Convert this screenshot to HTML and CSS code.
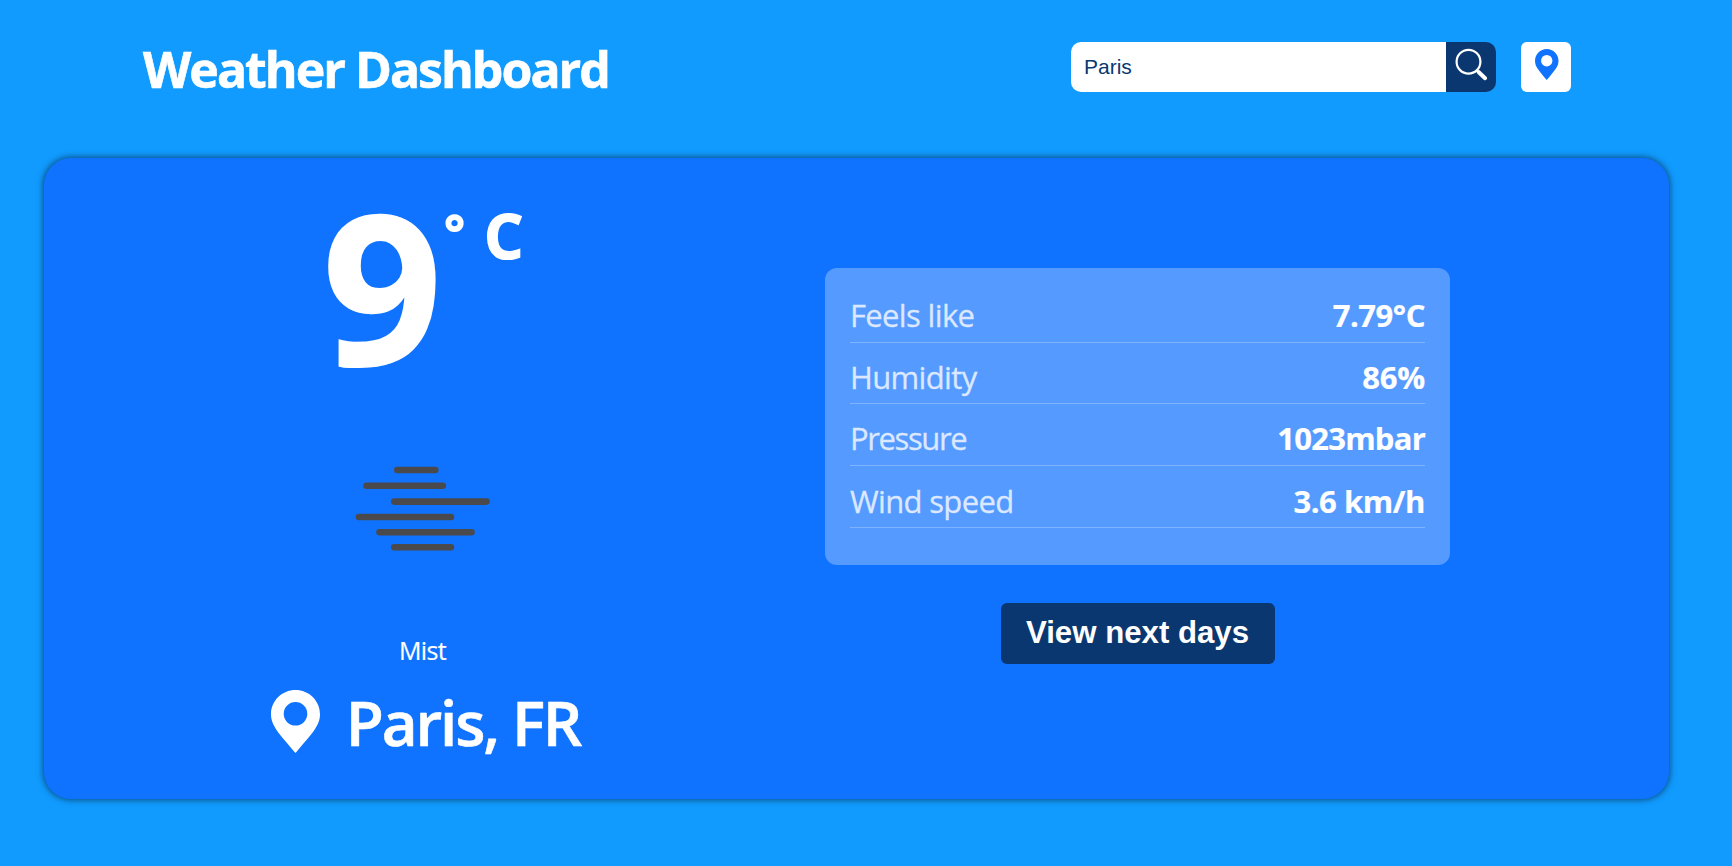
FILE: index.html
```html
<!DOCTYPE html>
<html lang="en">
<head>
<meta charset="utf-8">
<title>Weather Dashboard</title>
<link rel="stylesheet" href="styles.css">
</head>
<body>
<header class="header">
  <h1 class="title">Weather Dashboard</h1>
  <div class="search">
    <input class="search-input" type="text" value="Paris" aria-label="City">
    <button class="search-button" aria-label="Search">
      <svg width="34" height="34" viewBox="0 0 34 34" fill="none" stroke="#fff"><circle cx="14.500" cy="13.700" r="11.900" stroke-width="2.200"/><path d="M22.400 22l2 2" stroke-width="2.600"/><path d="M24.800 24.200l6.300 6" stroke-width="4" stroke-linecap="round"/></svg>
    </button>
    <button class="locate-button" aria-label="Use my location">
      <svg width="23.500" height="31" viewBox="0 0 49 63" preserveAspectRatio="none"><path fill="#1073ff" fill-rule="evenodd" d="M24.500 0C11 0 0 10.800 0 24.200C0 36 9 44.500 24.500 63C40 44.500 49 36 49 24.200C49 10.800 38 0 24.500 0ZM24.500 12a11.800 11.800 0 1 1 0 23.600a11.800 11.800 0 0 1 0-23.600Z"/></svg>
    </button>
  </div>
</header>
<main class="card">
  <section class="current">
    <div class="temp"><span class="temp-value">9</span><span class="temp-degree">°</span><span class="temp-unit">C</span></div>
    <svg class="mist-icon" width="136" height="85" viewBox="0 0 136 85" stroke="#4a4a4d" stroke-width="6.600" stroke-linecap="round"><path d="M42.300 4H80.300M11.500 19.800H87.800M39.300 35.600H131.500M4 51H96M24.500 66.200H116.500M39.300 81.300H96"/></svg>
    <p class="condition">Mist</p>
    <div class="place">
      <svg width="49" height="63" viewBox="0 0 49 63"><path fill="#fff" fill-rule="evenodd" d="M24.500 0C11 0 0 10.800 0 24.200C0 36 9 44.500 24.500 63C40 44.500 49 36 49 24.200C49 10.800 38 0 24.500 0ZM24.500 12a11.800 11.800 0 1 1 0 23.600a11.800 11.800 0 0 1 0-23.600Z"/></svg>
      <h2 class="city">Paris, FR</h2>
    </div>
  </section>
  <section class="details">
    <dl class="stats">
      <div class="row"><dt class="label">Feels like</dt><dd class="value">7.79°C</dd></div>
      <div class="row"><dt class="label">Humidity</dt><dd class="value short">86%</dd></div>
      <div class="row"><dt class="label tight">Pressure</dt><dd class="value wide">1023mbar</dd></div>
      <div class="row last"><dt class="label">Wind speed</dt><dd class="value">3.6 km/h</dd></div>
    </dl>
    <button class="next">View next days</button>
  </section>
</main>
</body>
</html>
```
FILE: styles.css
```css
* { box-sizing: border-box; margin: 0; padding: 0; }
body { height: 866px; overflow: hidden; background: #119bff; color: #fff; font-family: "Open Sans", sans-serif; }
button { border: 0; }
.header { display: flex; justify-content: space-between; align-items: flex-start; height: 158px; padding: 34px 161px 0 143px; }
.title { padding-top: 1px; font-size: 50px; line-height: 68px; font-weight: 700; letter-spacing: -2px; -webkit-text-stroke: .6px #fff; white-space: nowrap; }
.search { display: flex; margin-top: 8px; }
.search-input { width: 375px; height: 50px; padding: 0 13px 1px; border: 0; border-radius: 10px 0 0 10px; background: #fff; color: #0a3770; font: 21px "Liberation Sans", sans-serif; }
.search-button { display: flex; width: 50px; height: 50px; padding: 6px 0 0 8px; border-radius: 0 10px 10px 0; background: #0a3770; }
.locate-button { display: flex; width: 50px; height: 50px; margin-left: 25px; padding: 7px 0 0 14px; border-radius: 6px; background: #fff; }
.card { display: flex; width: 1625px; height: 641px; margin-left: 44px; border-radius: 27px; background: #1073ff; box-shadow: 0 0 6px 1px rgba(0, 0, 0, .5); }
.current { display: flex; flex-direction: column; align-items: center; width: 758px; padding-top: 22px; }
.temp { display: flex; height: 209px; }
.temp-value { font-size: 209px; line-height: 209px; font-weight: 700; -webkit-text-stroke: 2px #fff; }
.temp-degree, .temp-unit { margin-top: 24px; font-size: 62px; line-height: 62px; font-weight: 700; }
.temp-degree { width: 25px; margin-left: 2px; font-size: 50px; line-height: 54px; font-weight: 800; }
.temp-unit { margin-left: 15px; -webkit-text-stroke: 1.2px #fff; }
.mist-icon { margin-top: 77px; }
.condition { margin-top: 82px; padding-right: 1px; font-size: 25px; line-height: 34px; letter-spacing: -.6px; -webkit-text-stroke: .2px #fff; }
.place { display: flex; align-items: center; gap: 26px; height: 80px; margin-top: 14px; padding-left: 5px; }
.city { padding-top: 1px; font-size: 62px; line-height: 80px; font-weight: 600; letter-spacing: -2.15px; -webkit-text-stroke: .6px #fff; white-space: nowrap; }
.details { display: flex; flex-direction: column; align-items: center; width: 671px; padding-top: 110px; }
.stats { width: 625px; height: 297px; padding: 13px 25px 0; border-radius: 12px; background: #549aff; }
.row { display: flex; justify-content: space-between; height: 61.7px; padding-top: 13px; border-bottom: 1px solid #80b3ff; font-size: 31px; line-height: 42px; white-space: nowrap; }
.last { padding-top: 14px; }
.label { color: #dce8ff; letter-spacing: -.65px; -webkit-text-stroke: .3px #dce8ff; }
.tight { letter-spacing: -1.4px; }
.value { font-weight: 700; letter-spacing: -.45px; -webkit-text-stroke: .2px #fff; }
.short { letter-spacing: -.2px; }
.wide { letter-spacing: -.75px; }
.next { width: 274px; height: 61px; margin-top: 38px; padding-bottom: 1px; border-radius: 6px; background: #0a3770; color: #fff; font: 700 31.2px "Liberation Sans", sans-serif; white-space: nowrap; }
```
